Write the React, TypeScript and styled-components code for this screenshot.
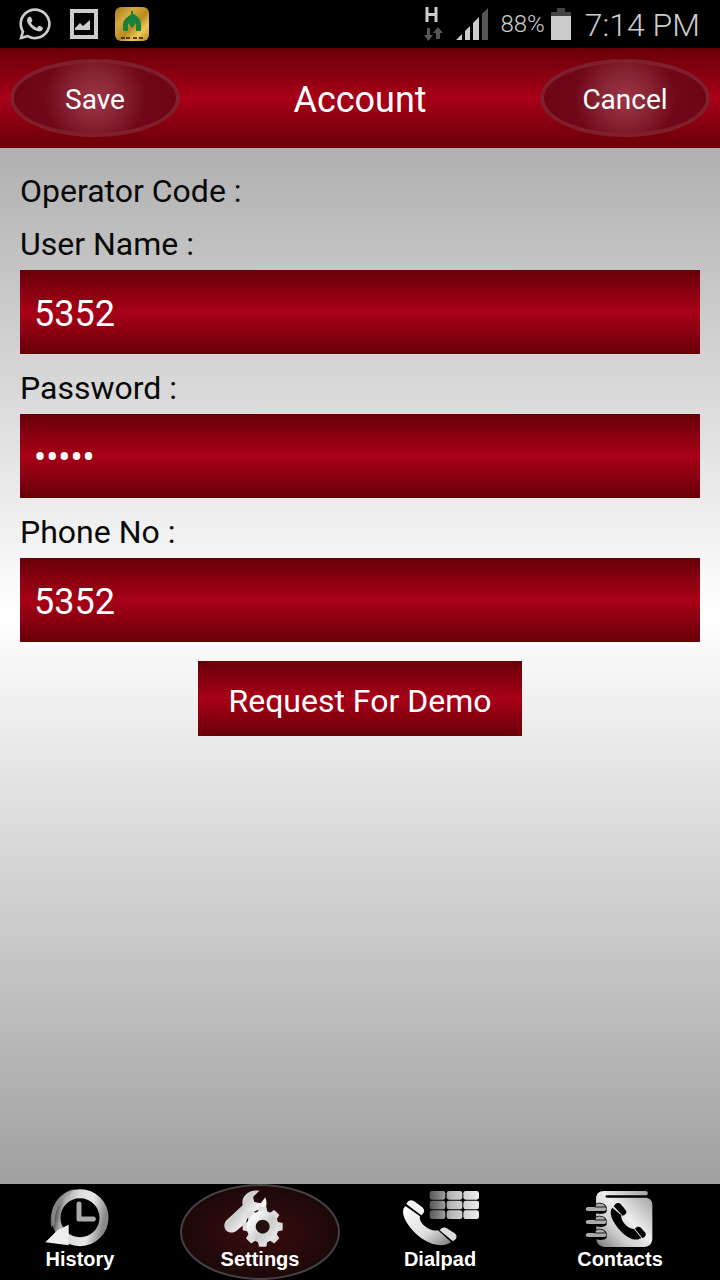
import React, { useState } from "react";
import styled, { createGlobalStyle } from "styled-components";
import { FaWhatsapp } from "react-icons/fa";

const GlobalStyle = createGlobalStyle`
  * { box-sizing: border-box; }
  body {
    margin: 0;
    background: #000;
    font-family: Roboto, "Liberation Sans", sans-serif;
  }
  button, input { font: inherit; margin: 0; }
`;

const redBand = "linear-gradient(180deg, #680008 0%, #a80018 50%, #680008 100%)";

const Screen = styled.div`
  min-height: 100vh;
  display: flex;
  flex-direction: column;
`;

const StatusBar = styled.div`
  height: 48px;
  padding: 0 20px 0 17px;
  display: flex;
  align-items: center;
  justify-content: space-between;
  background: #000;
  color: #ccc;
`;

const StatusGroup = styled.div<{ $gap: number }>`
  display: flex;
  align-items: center;
  gap: ${(p) => p.$gap}px;
  svg { display: block; }
`;

const Battery = styled.span`
  font-size: 24px;
  font-weight: 300;
  margin-right: -6px;
`;

const Clock = styled.span`
  font-size: 32px;
  font-weight: 300;
  line-height: 36px;
  padding-top: 2px;
  margin-left: 2px;
`;

const Header = styled.header`
  height: 100px;
  padding: 0 10px;
  display: flex;
  align-items: center;
  justify-content: space-between;
  background: ${redBand};
  color: #fff;
`;

const Title = styled.h1`
  margin: 0;
  padding-top: 4px;
  font-size: 36px;
  font-weight: 400;
  line-height: 44px;
`;

const OvalButton = styled.button`
  width: 170px;
  height: 78px;
  padding: 2px 0 0;
  border: 4px solid #7f1f2c;
  border-radius: 50%;
  background: radial-gradient(circle, #9c3444 0px, #882636 24px, #70081a 50px, #6c0412 100%);
  color: #fff;
  font-size: 28px;
`;

const Form = styled.form`
  flex: 1;
  padding: 24px 20px;
  display: flex;
  flex-direction: column;
  gap: 15px;
  color: #080808;
  background: linear-gradient(180deg, #b0b0b0 0%, #fff 45%, #a0a0a0 100%);
`;

const Field = styled.div`
  display: flex;
  flex-direction: column;
  gap: 7px;
`;

const Caption = styled.label`
  font-size: 32px;
  line-height: 38px;
`;

const TextBox = styled.input`
  width: 100%;
  height: 84px;
  padding: 4px 14px 0;
  border: 0;
  border-radius: 0;
  outline: 0;
  background: ${redBand};
  color: #fff;
  font-size: 36px;
`;

const DemoButton = styled.button`
  align-self: center;
  height: 75px;
  margin-top: 4px;
  padding: 4px 30px 0;
  border: 0;
  background: ${redBand};
  color: #fff;
  font-size: 32px;
`;

const TabBar = styled.nav`
  height: 96px;
  display: grid;
  grid-template-columns: repeat(4, 1fr);
  background: #000;
`;

const Tab = styled.button<{ $active: boolean }>`
  width: 160px;
  height: 96px;
  padding: 0;
  display: flex;
  flex-direction: column;
  align-items: center;
  justify-content: flex-start;
  border: 2px solid ${(p) => (p.$active ? "#484243" : "#000")};
  border-radius: 50%;
  background: ${(p) =>
    p.$active ? "radial-gradient(closest-side, #3a0a0e 0%, #2c0a0c 50%, #1c0809 100%)" : "#000"};
  color: #fff;
  font-family: "Liberation Sans", Arial, sans-serif;
  font-size: 20px;
  font-weight: 700;
  line-height: 22px;
  svg { display: block; }
`;

const PictureIcon = () => (
  <svg width="28" height="30" viewBox="0 0 28 30" aria-hidden="true">
    <rect x="2" y="2" width="24" height="26" fill="none" stroke="#ccc" strokeWidth="4" />
    <path d="M5 21V19L10 14L13 17L20 11V21Z" fill="#ccc" />
  </svg>
);

const MosqueIcon = () => (
  <svg width="34" height="34" viewBox="0 0 34 34" aria-hidden="true">
    <defs>
      <linearGradient id="gold" x1="0" y1="0" x2="1" y2="1">
        <stop offset="0" stopColor="#a47718" />
        <stop offset=".3" stopColor="#d5aa3e" />
        <stop offset=".55" stopColor="#b98a1f" />
        <stop offset=".75" stopColor="#ebca55" />
        <stop offset="1" stopColor="#b5861d" />
      </linearGradient>
    </defs>
    <rect width="34" height="34" rx="6" fill="url(#gold)" />
    <path d="M16 4h2v3c5 2 8 6 8 11v6h-5v-8l-4 5-4-5v8H8v-6C8 14 11 10 16 8Z" fill="#17803a" />
    <path d="M6 31h4m1 0h4m3 0h4m2 0h4" stroke="#4d3b0b" strokeWidth="2" />
  </svg>
);

const DataIcon = () => (
  <svg width="20" height="36" viewBox="0 0 20 36" aria-hidden="true">
    <path d="M3 1V16M12 1V16M3 8.500H12" stroke="#ccc" strokeWidth="3" fill="none" />
    <path d="M3 22h3v7h3l-4.500 6L0 29h3ZM12 33h4v-6h3l-5-6-5 6h3Z" fill="#555" />
  </svg>
);

const SignalIcon = () => (
  <svg width="32" height="32" viewBox="0 0 32 32" aria-hidden="true">
    <path d="M0 32L6 26V32ZM9 23L14 18V32H9ZM17 15L23 9V32H17Z" fill="#ccc" />
    <path d="M26 6L32 0V32H26Z" fill="#555" />
  </svg>
);

const BatteryIcon = () => (
  <svg width="20" height="32" viewBox="0 0 20 32" aria-hidden="true">
    <path d="M6 0h8v4h6v4H0V4h6Z" fill="#444" />
    <rect y="8" width="20" height="24" fill="#ccc" />
  </svg>
);

const TabIcon = ({ children }: { children: React.ReactNode }) => (
  <svg width="80" height="62" viewBox="60 18 240 186" aria-hidden="true">
    {children}
  </svg>
);

const HistoryIcon = () => (
  <TabIcon>
    <defs>
      <linearGradient id="ring" x1="0" y1=".4" x2="1" y2=".6">
        <stop offset="0" stopColor="#555" />
        <stop offset=".12" stopColor="#aaa" />
        <stop offset=".4" stopColor="#ddd" />
        <stop offset=".7" stopColor="#e8e8e8" />
        <stop offset="1" stopColor="#888" />
      </linearGradient>
    </defs>
    <circle cx="180" cy="113" r="72" fill="none" stroke="url(#ring)" strokeWidth="27" />
    <path d="M94 142C84 80 121 35 162 28L147 46C119 62 103 92 104 134Z" fill="#999" opacity=".7" />
    <path d="M177 72V117H220" fill="none" stroke="#aaa" strokeWidth="15" strokeLinecap="round" strokeLinejoin="round" />
    <path d="M76 187L112 151L146 134V196Z" fill="#eee" />
  </TabIcon>
);

const teeth = [0, 45, 90, 135, 180, 225, 270, 315];

const SettingsIcon = () => (
  <TabIcon>
    <defs>
      <linearGradient id="steel" gradientUnits="userSpaceOnUse" x1="80" y1="60" x2="230" y2="180">
        <stop offset="0" stopColor="#eee" />
        <stop offset=".25" stopColor="#ccc" />
        <stop offset=".5" stopColor="#f8f8f8" />
        <stop offset=".75" stopColor="#ccc" />
        <stop offset="1" stopColor="#eee" />
      </linearGradient>
    </defs>
    <path
      d="M178 32C145 28 122 50 128 76L78 122C62 146 88 168 110 152L148 120L186 98C200 86 203 70 196 52L182 70L163 66L159 51Z"
      fill="url(#steel)"
    />
    <circle cx="188" cy="140" r="52" fill="#241011" />
    {teeth.map((angle) => (
      <path key={angle} d="M173 99L177 80H199L203 99Z" fill="#ddd" transform={`rotate(${angle} 188 140)`} />
    ))}
    <path
      fill="url(#steel)"
      fillRule="evenodd"
      d="M188 92a48 48 0 1 0 0 96a48 48 0 1 0 0-96ZM188 119a21 21 0 1 1 0 42a21 21 0 1 1 0-42Z"
    />
  </TabIcon>
);

const DialpadIcon = () => (
  <TabIcon>
    <defs>
      <linearGradient id="keys" gradientUnits="userSpaceOnUse" x1="148" y1="0" x2="298" y2="0">
        <stop offset="0" stopColor="#555" />
        <stop offset=".45" stopColor="#bbb" />
        <stop offset="1" stopColor="#eee" />
      </linearGradient>
      <linearGradient id="handset" x1="0" y1="0" x2="1" y2="1">
        <stop offset="0" stopColor="#fff" />
        <stop offset=".6" stopColor="#ddd" />
        <stop offset="1" stopColor="#777" />
      </linearGradient>
    </defs>
    <g fill="url(#keys)">
      {[33, 62, 91].map((y) =>
        [149, 200, 250].map((x) => <rect key={`${x}-${y}`} x={x} y={y} width="47" height="26" rx="7" />)
      )}
    </g>
    <path
      d="M76 78L120 109C114 130 152 157 174 151L213 186C196 201 159 199 129 178C94 154 61 111 71 85Z"
      fill="url(#handset)"
    />
    <path d="M79 72C86 57 97 59 106 66L126 81C136 90 134 97 124 106Z" fill="#f2f2f2" />
    <path d="M179 151C186 141 195 140 205 148L224 160C233 168 231 177 219 184Z" fill="#ddd" />
  </TabIcon>
);

const ContactsIcon = () => (
  <TabIcon>
    <defs>
      <linearGradient id="book" x1="0" y1="1" x2="1" y2="0">
        <stop offset="0" stopColor="#777" />
        <stop offset=".3" stopColor="#ccc" />
        <stop offset=".55" stopColor="#eee" />
        <stop offset="1" stopColor="#999" />
      </linearGradient>
    </defs>
    <path
      d="M108 58C108 42 116 33 132 33H256C266 33 266 46 256 46H141C135 46 135 53 141 53H254C269 53 277 61 277 76V175C277 191 268 201 252 201H136C119 201 109 191 109 175Z"
      fill="url(#book)"
    />
    {[81, 120, 159].map((y) => (
      <g key={y}>
        <path d={`M104 ${y - 10}H109C113 ${y - 15} 134 ${y - 15} 140 ${y}V${y + 14}C135 ${y + 22} 114 ${y + 22} 104 ${y + 18}Z`} fill="#000" />
        <path d={`M84 ${y}H107V${y - 6}C112 ${y - 13} 131 ${y - 13} 137 ${y}C142 ${y + 7} 137 ${y + 12} 132 ${y + 12}H84C75 ${y + 12} 75 ${y} 84 ${y}Z`} fill="#aaa" />
        <path d={`M104 ${y}H138`} stroke="#222" strokeWidth="3" />
      </g>
    ))}
    <path
      d="M157 83L184 106C180 121 205 149 222 147L244 174C226 186 200 174 179 150C158 125 144 98 157 83Z"
      fill="#000"
    />
    <path d="M161 79C167 67 177 66 184 74L196 89C203 98 197 103 188 107Z" fill="#000" />
    <path d="M225 146C232 138 240 139 246 147L256 158C260 166 255 171 247 174Z" fill="#000" />
  </TabIcon>
);

const tabs = [
  { name: "History", Icon: HistoryIcon },
  { name: "Settings", Icon: SettingsIcon },
  { name: "Dialpad", Icon: DialpadIcon },
  { name: "Contacts", Icon: ContactsIcon },
];

export default function App() {
  const [active, setActive] = useState("Settings");

  return (
    <Screen>
      <GlobalStyle />
      <StatusBar>
        <StatusGroup $gap={17}>
          <FaWhatsapp size={36} color="#ccc" />
          <PictureIcon />
          <MosqueIcon />
        </StatusGroup>
        <StatusGroup $gap={12}>
          <DataIcon />
          <SignalIcon />
          <Battery>88%</Battery>
          <BatteryIcon />
          <Clock>7:14 PM</Clock>
        </StatusGroup>
      </StatusBar>
      <Header>
        <OvalButton type="submit" form="account">Save</OvalButton>
        <Title>Account</Title>
        <OvalButton type="button">Cancel</OvalButton>
      </Header>
      <Form id="account" onSubmit={(e) => e.preventDefault()}>
        <Caption as="div">Operator Code :</Caption>
        <Field>
          <Caption htmlFor="user">User Name :</Caption>
          <TextBox id="user" type="text" defaultValue="5352" />
        </Field>
        <Field>
          <Caption htmlFor="password">Password :</Caption>
          <TextBox id="password" type="password" defaultValue="12345" />
        </Field>
        <Field>
          <Caption htmlFor="phone">Phone No :</Caption>
          <TextBox id="phone" type="tel" defaultValue="5352" />
        </Field>
        <DemoButton type="button">Request For Demo</DemoButton>
      </Form>
      <TabBar>
        {tabs.map(({ name, Icon }) => (
          <Tab key={name} type="button" $active={name === active} onClick={() => setActive(name)}>
            <Icon />
            {name}
          </Tab>
        ))}
      </TabBar>
    </Screen>
  );
}
